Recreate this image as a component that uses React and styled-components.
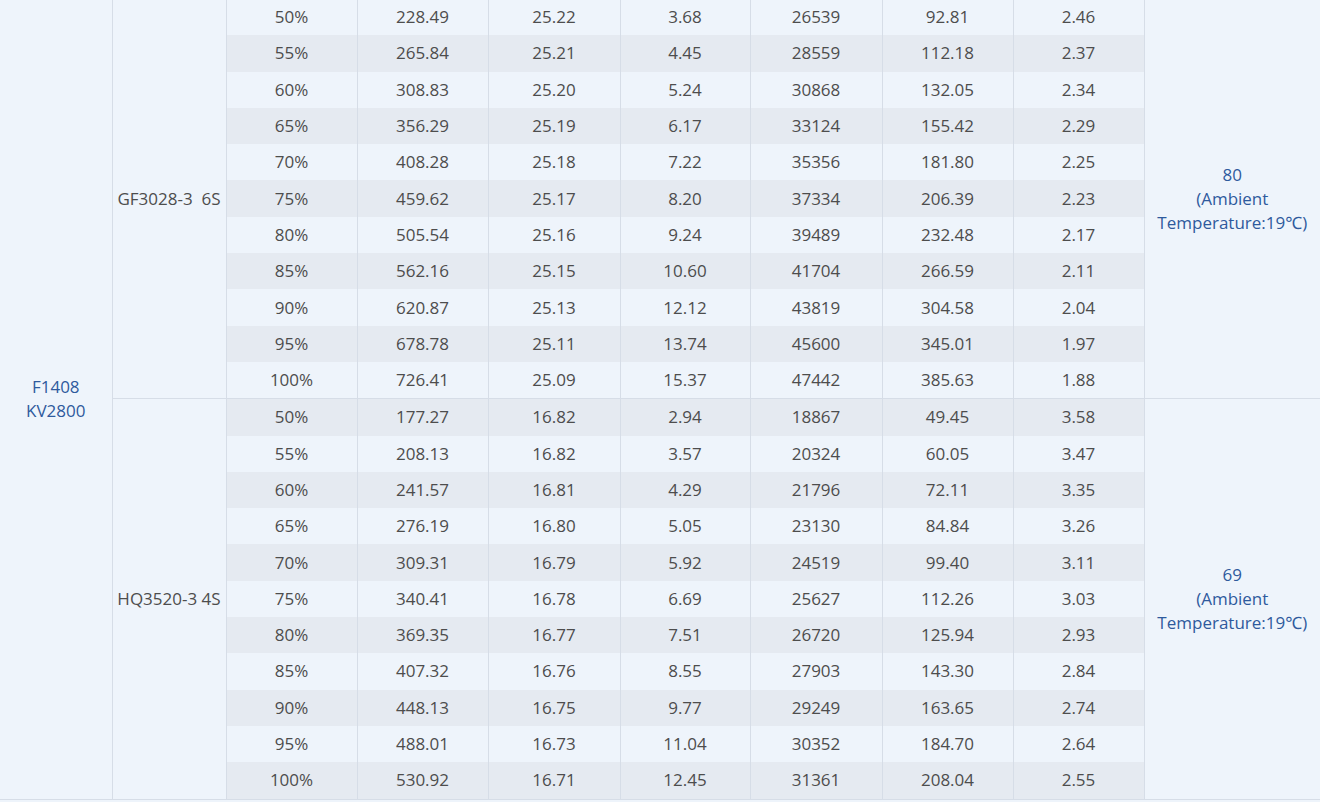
import React from "react";
import styled, { createGlobalStyle } from "styled-components";

const GlobalStyle = createGlobalStyle`
  html, body {
    margin: 0;
    padding: 0;
    background: #eef4fb;
    overflow: hidden;
  }
`;

const Wrap = styled.div`
  width: 1320px;
  margin-top: -1px;
`;

const Table = styled.table`
  width: 1320px;
  table-layout: fixed;
  border-collapse: collapse;
  font-family: "Open Sans", "Noto Sans", sans-serif;
  font-size: 17px;
  color: #4d4d4d;
`;

const Cell = styled.td`
  height: 36.3px;
  padding: 0;
  text-align: center;
  vertical-align: middle;
  white-space: pre;
  line-height: 24px;
  background: ${(p) => (p.$striped ? "#e5eaf1" : "#eef4fb")};
  border-left: ${(p) => (p.$noLeft ? "none" : "1px solid #d6dde7")};
  border-top: ${(p) => (p.$groupTop ? "1px solid #d6dde7" : "none")};
  border-bottom: ${(p) => (p.$last ? "1px solid #d6dde7" : "none")};
`;

const BlueCell = styled(Cell)`
  color: #2e5a9d;
  white-space: normal;
`;

const widths = [112, 114, 131, 131, 132, 130, 132, 131, 131, 176];

const groups = [
  {
    prop: "GF3028-3  6S",
    temp: "80",
    rows: [
      ["50%", "228.49", "25.22", "3.68", "26539", "92.81", "2.46"],
      ["55%", "265.84", "25.21", "4.45", "28559", "112.18", "2.37"],
      ["60%", "308.83", "25.20", "5.24", "30868", "132.05", "2.34"],
      ["65%", "356.29", "25.19", "6.17", "33124", "155.42", "2.29"],
      ["70%", "408.28", "25.18", "7.22", "35356", "181.80", "2.25"],
      ["75%", "459.62", "25.17", "8.20", "37334", "206.39", "2.23"],
      ["80%", "505.54", "25.16", "9.24", "39489", "232.48", "2.17"],
      ["85%", "562.16", "25.15", "10.60", "41704", "266.59", "2.11"],
      ["90%", "620.87", "25.13", "12.12", "43819", "304.58", "2.04"],
      ["95%", "678.78", "25.11", "13.74", "45600", "345.01", "1.97"],
      ["100%", "726.41", "25.09", "15.37", "47442", "385.63", "1.88"],
    ],
  },
  {
    prop: "HQ3520-3 4S",
    temp: "69",
    rows: [
      ["50%", "177.27", "16.82", "2.94", "18867", "49.45", "3.58"],
      ["55%", "208.13", "16.82", "3.57", "20324", "60.05", "3.47"],
      ["60%", "241.57", "16.81", "4.29", "21796", "72.11", "3.35"],
      ["65%", "276.19", "16.80", "5.05", "23130", "84.84", "3.26"],
      ["70%", "309.31", "16.79", "5.92", "24519", "99.40", "3.11"],
      ["75%", "340.41", "16.78", "6.69", "25627", "112.26", "3.03"],
      ["80%", "369.35", "16.77", "7.51", "26720", "125.94", "2.93"],
      ["85%", "407.32", "16.76", "8.55", "27903", "143.30", "2.84"],
      ["90%", "448.13", "16.75", "9.77", "29249", "163.65", "2.74"],
      ["95%", "488.01", "16.73", "11.04", "30352", "184.70", "2.64"],
      ["100%", "530.92", "16.71", "12.45", "31361", "208.04", "2.55"],
    ],
  },
];

const totalRows = groups.reduce((n, g) => n + g.rows.length, 0);

export default function App() {
  let index = 0;
  return (
    <Wrap>
      <GlobalStyle />
      <Table>
        <colgroup>
          {widths.map((w, i) => (
            <col key={i} style={{ width: w }} />
          ))}
        </colgroup>
        <tbody>
          {groups.map((g, gi) =>
            g.rows.map((r, ri) => {
              index += 1;
              const striped = index % 2 === 0;
              const groupTop = gi > 0 && ri === 0;
              const lastGroup = gi === groups.length - 1;
              const last = ri === g.rows.length - 1 && lastGroup;
              return (
                <tr key={`${gi}-${ri}`}>
                  {gi === 0 && ri === 0 && (
                    <BlueCell rowSpan={totalRows} $noLeft $last>
                      F1408
                      <br />
                      KV2800
                    </BlueCell>
                  )}
                  {ri === 0 && (
                    <Cell rowSpan={g.rows.length} $groupTop={groupTop} $last={lastGroup}>
                      {g.prop}
                    </Cell>
                  )}
                  {r.map((v, ci) => (
                    <Cell key={ci} $striped={striped} $groupTop={groupTop} $last={last}>
                      {v}
                    </Cell>
                  ))}
                  {ri === 0 && (
                    <BlueCell rowSpan={g.rows.length} $groupTop={groupTop} $last={lastGroup}>
                      {g.temp}
                      <br />
                      (Ambient
                      <br />
                      Temperature:19℃)
                    </BlueCell>
                  )}
                </tr>
              );
            })
          )}
        </tbody>
      </Table>
    </Wrap>
  );
}
